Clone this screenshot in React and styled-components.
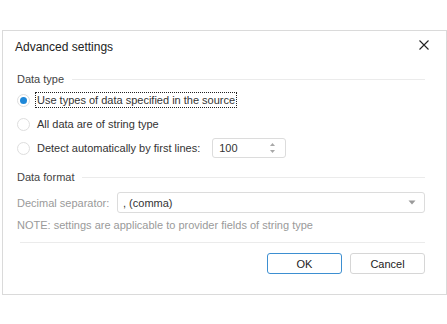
import React from 'react';
import styled, { createGlobalStyle } from 'styled-components';

const GlobalStyle = createGlobalStyle`
  body {
    margin: 0;
    background: #ffffff;
    font-family: 'Liberation Sans', Arial, sans-serif;
    font-size: 11px;
    color: #333333;
  }
`;

const Page = styled.div`
  padding: 30px 0 0 2px;
`;

const Dialog = styled.div`
  box-sizing: border-box;
  width: 445px;
  height: 265px;
  border: 1px solid #dadada;
  background: #ffffff;
  display: flex;
  flex-direction: column;
`;

const Header = styled.div`
  height: 30px;
  display: flex;
  align-items: center;
  justify-content: space-between;
  padding: 0 16px 0 12px;
`;

const Title = styled.div`
  font-size: 12px;
  color: #222222;
  padding-top: 1px;
`;

const Close = styled.button`
  border: none;
  background: none;
  padding: 0 0 3px;
  width: 12px;
  height: 14px;
  display: flex;
  align-items: center;
  justify-content: center;
`;

const Body = styled.div`
  padding: 0 21px 0 14px;
  display: flex;
  flex-direction: column;
`;

const Section = styled.div`
  display: flex;
  align-items: center;
  gap: 8px;
  height: 18px;
  margin-top: ${(p) => p.$top}px;
  color: #444444;
  &::after {
    content: '';
    flex: 1;
    height: 1px;
    background: #ebebeb;
  }
`;

const RadioRow = styled.label`
  display: flex;
  align-items: center;
  height: 24px;
  color: #333333;
`;

const RadioDot = styled.span`
  box-sizing: border-box;
  width: 13px;
  height: 13px;
  border-radius: 50%;
  border: 1px solid #dedede;
  margin-right: 5px;
  display: flex;
  align-items: center;
  justify-content: center;
  &::after {
    content: '';
    width: 7px;
    height: 7px;
    border-radius: 50%;
    background: ${(p) => (p.$on ? '#1f88d8' : 'transparent')};
  }
`;

const RadioText = styled.span`
  padding: 1px 1px;
  border: 1px dotted ${(p) => (p.$focus ? '#222222' : 'transparent')};
`;

const Spin = styled.div`
  box-sizing: border-box;
  width: 74px;
  height: 20px;
  margin-left: 10px;
  border: 1px solid #dcdcdc;
  border-radius: 3px;
  display: flex;
  align-items: center;
  justify-content: space-between;
  padding: 0 9px 0 6px;
`;

const FieldRow = styled.div`
  display: flex;
  align-items: center;
  margin-top: 6px;
`;

const Muted = styled.span`
  color: #9a9a9a;
  width: 100px;
`;

const Select = styled.div`
  box-sizing: border-box;
  flex: 1;
  height: 21px;
  border: 1px solid #dcdcdc;
  border-radius: 3px;
  display: flex;
  align-items: center;
  justify-content: space-between;
  padding: 0 8px 0 5px;
  color: #333333;
`;

const Note = styled.div`
  color: #9a9a9a;
  height: 16px;
  line-height: 16px;
  margin-top: 4px;
`;

const Divider = styled.div`
  height: 1px;
  background: #ebebeb;
  margin: 9px 0 0 3px;
`;

const Buttons = styled.div`
  display: flex;
  justify-content: flex-end;
  gap: 8px;
  margin-top: 10px;
`;

const Button = styled.button`
  box-sizing: border-box;
  width: 75px;
  height: 21px;
  border-radius: 3px;
  border: 1px solid ${(p) => (p.$primary ? '#3d8fd1' : '#d6d6d6')};
  background: #ffffff;
  font-family: inherit;
  font-size: 11px;
  color: #222222;
  padding: 0;
`;

export default function App() {
  return (
    <Page>
      <GlobalStyle />
      <Dialog>
        <Header>
          <Title>Advanced settings</Title>
          <Close>
            <svg width="10" height="10" viewBox="0 0 10 10">
              <path d="M0.5 0.5 L9.5 9.5 M9.5 0.5 L0.5 9.5" stroke="#222" strokeWidth="1.1" />
            </svg>
          </Close>
        </Header>
        <Body>
          <Section $top={9}>Data type</Section>
          <RadioRow>
            <RadioDot $on />
            <RadioText $focus>Use types of data specified in the source</RadioText>
          </RadioRow>
          <RadioRow>
            <RadioDot />
            <RadioText>All data are of string type</RadioText>
          </RadioRow>
          <RadioRow>
            <RadioDot />
            <RadioText>Detect automatically by first lines:</RadioText>
            <Spin>
              <span>100</span>
              <svg width="7" height="12" viewBox="0 0 7 12">
                <path d="M3.5 1 L6 4 L1 4 Z" fill="#a8a8a8" />
                <path d="M1 8 L6 8 L3.5 11 Z" fill="#a8a8a8" />
              </svg>
            </Spin>
          </RadioRow>
          <Section $top={8}>Data format</Section>
          <FieldRow>
            <Muted>Decimal separator:</Muted>
            <Select>
              <span>, (comma)</span>
              <svg width="8" height="5" viewBox="0 0 8 5">
                <path d="M0.5 0.5 L7.5 0.5 L4 4.5 Z" fill="#9a9a9a" />
              </svg>
            </Select>
          </FieldRow>
          <Note>NOTE: settings are applicable to provider fields of string type</Note>
          <Divider />
          <Buttons>
            <Button $primary>OK</Button>
            <Button>Cancel</Button>
          </Buttons>
        </Body>
      </Dialog>
    </Page>
  );
}
